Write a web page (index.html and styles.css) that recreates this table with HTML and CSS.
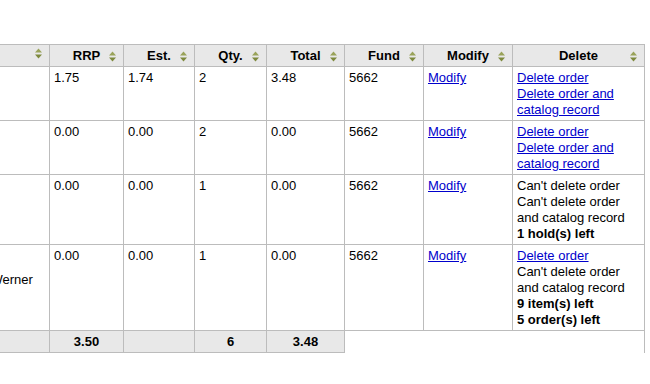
FILE: index.html
```html
<!DOCTYPE html>
<html>
<head>
<meta charset="utf-8">
<link rel="stylesheet" href="styles.css">
</head>
<body>
<div class="viewport">
<table class="orders">
  <colgroup>
    <col class="c-sum">
    <col class="c-rrp">
    <col class="c-est">
    <col class="c-qty">
    <col class="c-tot">
    <col class="c-fund">
    <col class="c-mod">
    <col class="c-del">
  </colgroup>
  <thead>
    <tr>
      <th><div class="hd"><span class="lbl"></span><svg class="sort" viewBox="0 0 7 11" width="7" height="11"><polygon points="0,4.5 3.5,0.5 7,4.5" fill="#9aa35a"/><polygon points="0,6.5 3.5,10.5 7,6.5" fill="#7e8a3e"/></svg></div></th>
      <th><div class="hd"><span class="lbl">RRP</span><svg class="sort" viewBox="0 0 7 11" width="7" height="11"><polygon points="0,4.5 3.5,0.5 7,4.5" fill="#9aa35a"/><polygon points="0,6.5 3.5,10.5 7,6.5" fill="#7e8a3e"/></svg></div></th>
      <th><div class="hd"><span class="lbl">Est.</span><svg class="sort" viewBox="0 0 7 11" width="7" height="11"><polygon points="0,4.5 3.5,0.5 7,4.5" fill="#9aa35a"/><polygon points="0,6.5 3.5,10.5 7,6.5" fill="#7e8a3e"/></svg></div></th>
      <th><div class="hd"><span class="lbl">Qty.</span><svg class="sort" viewBox="0 0 7 11" width="7" height="11"><polygon points="0,4.5 3.5,0.5 7,4.5" fill="#9aa35a"/><polygon points="0,6.5 3.5,10.5 7,6.5" fill="#7e8a3e"/></svg></div></th>
      <th><div class="hd"><span class="lbl">Total</span><svg class="sort" viewBox="0 0 7 11" width="7" height="11"><polygon points="0,4.5 3.5,0.5 7,4.5" fill="#9aa35a"/><polygon points="0,6.5 3.5,10.5 7,6.5" fill="#7e8a3e"/></svg></div></th>
      <th><div class="hd"><span class="lbl">Fund</span><svg class="sort" viewBox="0 0 7 11" width="7" height="11"><polygon points="0,4.5 3.5,0.5 7,4.5" fill="#9aa35a"/><polygon points="0,6.5 3.5,10.5 7,6.5" fill="#7e8a3e"/></svg></div></th>
      <th><div class="hd"><span class="lbl">Modify</span><svg class="sort" viewBox="0 0 7 11" width="7" height="11"><polygon points="0,4.5 3.5,0.5 7,4.5" fill="#9aa35a"/><polygon points="0,6.5 3.5,10.5 7,6.5" fill="#7e8a3e"/></svg></div></th>
      <th><div class="hd"><span class="lbl">Delete</span><svg class="sort" viewBox="0 0 7 11" width="7" height="11"><polygon points="0,4.5 3.5,0.5 7,4.5" fill="#9aa35a"/><polygon points="0,6.5 3.5,10.5 7,6.5" fill="#7e8a3e"/></svg></div></th>
    </tr>
  </thead>
  <tbody>
    <tr>
      <td class="sum"></td>
      <td>1.75</td>
      <td>1.74</td>
      <td>2</td>
      <td>3.48</td>
      <td>5662</td>
      <td><a href="#">Modify</a></td>
      <td><a href="#">Delete order</a><br><a href="#">Delete order and catalog record</a></td>
    </tr>
    <tr>
      <td class="sum"></td>
      <td>0.00</td>
      <td>0.00</td>
      <td>2</td>
      <td>0.00</td>
      <td>5662</td>
      <td><a href="#">Modify</a></td>
      <td><a href="#">Delete order</a><br><a href="#">Delete order and catalog record</a></td>
    </tr>
    <tr>
      <td class="sum"></td>
      <td>0.00</td>
      <td>0.00</td>
      <td>1</td>
      <td>0.00</td>
      <td>5662</td>
      <td><a href="#">Modify</a></td>
      <td>Can't delete order<br>Can't delete order and catalog record<br><b>1 hold(s) left</b></td>
    </tr>
    <tr>
      <td class="sum">Nikolaus Werner<br>2009</td>
      <td>0.00</td>
      <td>0.00</td>
      <td>1</td>
      <td>0.00</td>
      <td>5662</td>
      <td><a href="#">Modify</a></td>
      <td><a href="#">Delete order</a><br>Can't delete order and catalog record<br><b>9 item(s) left</b><br><b>5 order(s) left</b></td>
    </tr>
  </tbody>
  <tfoot>
    <tr>
      <th></th>
      <th>3.50</th>
      <th></th>
      <th>6</th>
      <th>3.48</th>
      <td class="blank" colspan="3"></td>
    </tr>
  </tfoot>
</table>
</div>
</body>
</html>
```

FILE: styles.css
```css
html, body {
  margin: 0;
  padding: 0;
  background: #ffffff;
}

body {
  font-family: "Liberation Sans", Arial, sans-serif;
  font-size: 13px;
  line-height: 16px;
  color: #000000;
}

.viewport {
  width: 650px;
  height: 384px;
  overflow: hidden;
  padding-top: 44px;
  box-sizing: border-box;
}

.orders {
  border-collapse: collapse;
  table-layout: fixed;
  width: 712px;
  margin-left: -68px;
}

.c-sum { width: 117px; }
.c-rrp { width: 74px; }
.c-est { width: 71px; }
.c-qty { width: 72px; }
.c-tot { width: 78px; }
.c-fund { width: 79px; }
.c-mod { width: 89px; }
.c-del { width: 132px; }

.orders th,
.orders td {
  border: 1px solid #bcbcbc;
  padding: 3px 4px 2px 4px;
  text-align: left;
  vertical-align: top;
}

.orders th {
  background: #e8e8e8;
  font-weight: bold;
  text-align: center;
}

.hd {
  display: grid;
  grid-template-columns: 1fr auto 1fr;
  align-items: center;
}

.hd .lbl {
  grid-column: 2;
  white-space: nowrap;
}

.hd .sort {
  grid-column: 3;
  justify-self: end;
  margin-right: 3px;
  display: block;
}

.orders td.sum {
  vertical-align: middle;
}

.orders a {
  color: #0000cc;
  text-decoration: underline;
}

.orders td.blank {
  background: #ffffff;
  border-bottom: none;
}
```
